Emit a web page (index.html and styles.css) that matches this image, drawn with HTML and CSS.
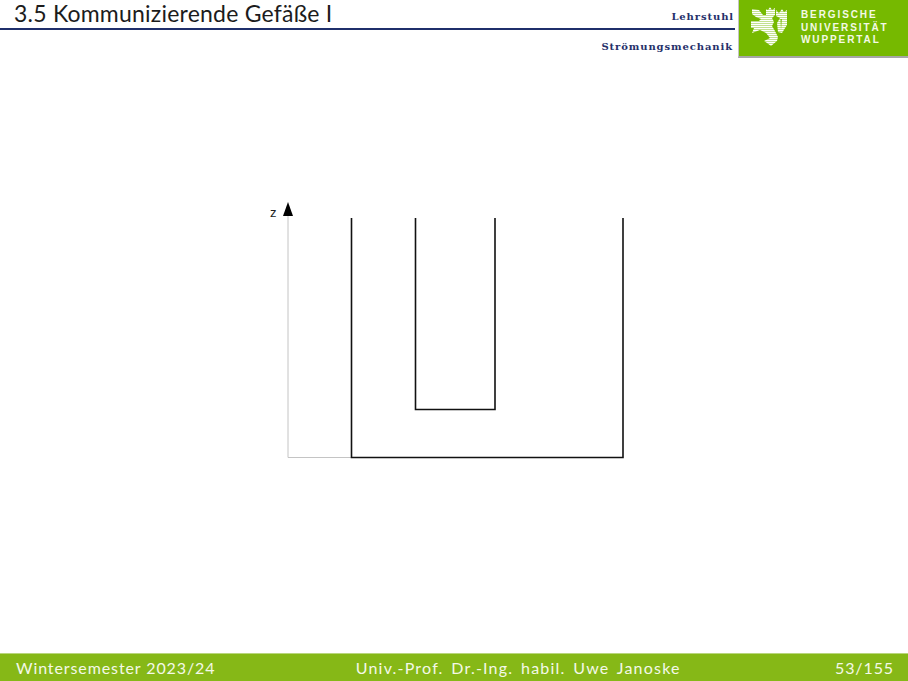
FILE: index.html
```html
<!DOCTYPE html>
<html lang="de">

<head>
  <meta charset="UTF-8">
  <meta name="viewport" content="width=device-width, initial-scale=1.0">
  <title>3.5 Kommunizierende Gefäße I</title>
  <link rel="stylesheet" href="styles.css">
</head>

<body>
  <div class="slide">
    <header class="head">
      <div class="headLeft">
        <div class="headTop">
          <h1 class="title">3.5 Kommunizierende Gefäße I</h1>
          <span class="chair">Lehrstuhl</span>
        </div>
        <div class="headBottom">
          <span class="chair">Strömungsmechanik</span>
        </div>
      </div>
      <div class="logo">
        <svg class="lion" width="60" height="56" viewBox="0 0 60 56">
          <defs>
            <pattern id="stripes" width="2" height="2" patternUnits="userSpaceOnUse">
              <rect width="2" height="2" fill="#fff" fill-opacity="0.45"></rect>
              <rect width="2" height="1.2" fill="#fff"></rect>
            </pattern>
          </defs>
          <!-- Löwe -->
          <path fill="url(#stripes)" d="M13 9 L20 10 L24 15 L27 15 L27 9 L29 10 L31 7 L33 10 L36 8 L36 15 L33 18 L35 22 L33 26 L36 31 L39 37 L38 41 L32 46 L28 43 L25 41 L31 38 L27 33 L21 30 L13 33 L15 28 L12 28 L12 21 L20 21 L22 19 L17 17 L13 14 Z"></path>
          <path fill="url(#stripes)" fill-rule="evenodd" d="M37 10 L40 13 L43 9 L45 12 L48 10 L48 25 L43 33 L39 32 L38 23 L41 18 L37 16 Z M41.5 19 L42.8 19 L42 30 Z"></path>
        </svg>
        <div class="logoText">BERGISCHE<br>UNIVERSITÄT<br>WUPPERTAL</div>
      </div>
    </header>

    <main class="content">
      <svg class="figure" width="908" height="595" viewBox="0 58 908 595">
        <!-- z-Achse -->
        <path class="axis" d="M288 214V457.5H351"></path>
        <path class="arrow" d="M288 202L293 216H283Z"></path>
        <text class="axisLabel" x="270" y="217">z</text>
        <!-- Gefäße -->
        <path class="vessel" d="M351.5 218V457.5H623V218"></path>
        <path class="vessel" d="M415.5 218V409.5H495V218"></path>
      </svg>
    </main>

    <footer class="foot">
      <span>Wintersemester 2023/24</span>
      <span class="footMid">Univ.-Prof. Dr.-Ing. habil. Uwe Janoske</span>
      <span>53/155</span>
    </footer>
  </div>
</body>

</html>
```

FILE: styles.css
```css
body {
  margin: 0;
  background: #fff;
}

.slide {
  width: 908px;
  height: 681px;
  display: flex;
  flex-direction: column;
  overflow: hidden;
  font-family: "Lato", "Liberation Sans", sans-serif;
}

.head {
  height: 58px;
  display: flex;
  align-items: flex-start;
}

.headLeft {
  width: 735px;
  margin-right: 3px;
}

.headTop {
  height: 28px;
  display: flex;
  justify-content: space-between;
  align-items: flex-end;
  padding: 0 1px 0 14px;
  border-bottom: 2px solid #1f2f6b;
}

.headBottom {
  display: flex;
  justify-content: flex-end;
  padding: 10px 2px 0 0;
}

.title {
  margin: 0 0 2px;
  font-size: 23px;
  line-height: 26px;
  font-weight: 400;
  color: #1c1c1c;
  letter-spacing: 0.22px;
}

.chair {
  font-family: "DejaVu Serif", serif;
  font-size: 10px;
  line-height: 13px;
  font-weight: 700;
  letter-spacing: 0.9px;
  color: #25306a;
}

.headTop .chair {
  margin-bottom: 5px;
}

.logo {
  width: 169px;
  height: 56px;
  display: flex;
  align-items: flex-start;
  background: #76b900;
  border-left: 1px solid #c4c4c4;
  border-bottom: 2px solid #a6a6a6;
}

.lion {
  display: block;
}

.logoText {
  margin: 9px 0 0 2px;
  font-family: "Liberation Sans", sans-serif;
  font-size: 10px;
  line-height: 12.5px;
  font-weight: 700;
  letter-spacing: 1.9px;
  color: #f4f9e6;
}

.content {
  flex: 1;
}

.figure {
  display: block;
}

.axis {
  fill: none;
  stroke: #c4c4c4;
  stroke-width: 1;
}

.arrow {
  fill: #000;
}

.axisLabel {
  font-family: "Liberation Sans", sans-serif;
  font-size: 13px;
  fill: #222;
}

.vessel {
  fill: none;
  stroke: #111;
  stroke-width: 1.6;
}

.foot {
  height: 28px;
  box-sizing: border-box;
  display: flex;
  justify-content: space-between;
  align-items: center;
  padding: 0 14px 0 16px;
  background: #86b817;
  border-top: 1px solid #b9d67c;
  font-size: 16px;
  letter-spacing: 0.9px;
  color: #f4f8e8;
}

.footMid {
  margin-right: 14px;
  letter-spacing: 1.2px;
  word-spacing: 2.5px;
}
```
